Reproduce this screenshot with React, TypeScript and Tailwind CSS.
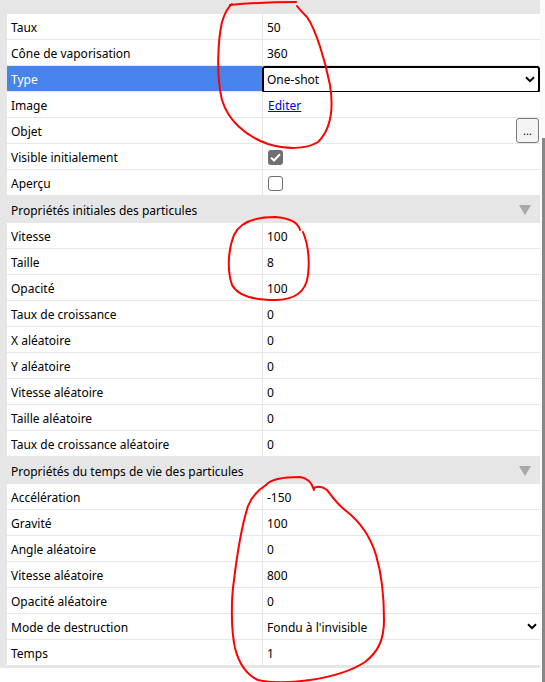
import React from 'react';

type Row =
  | { kind: 'text'; label: string; value: string }
  | { kind: 'header'; label: string }
  | { kind: 'select'; label: string; value: string; boxed?: boolean }
  | { kind: 'link'; label: string; value: string }
  | { kind: 'button'; label: string }
  | { kind: 'check'; label: string; checked: boolean };

const rows: Row[] = [
  { kind: 'text', label: 'Taux', value: '50' },
  { kind: 'text', label: 'Cône de vaporisation', value: '360' },
  { kind: 'select', label: 'Type', value: 'One-shot', boxed: true },
  { kind: 'link', label: 'Image', value: 'Editer' },
  { kind: 'button', label: 'Objet' },
  { kind: 'check', label: 'Visible initialement', checked: true },
  { kind: 'check', label: 'Aperçu', checked: false },
  { kind: 'header', label: 'Propriétés initiales des particules' },
  { kind: 'text', label: 'Vitesse', value: '100' },
  { kind: 'text', label: 'Taille', value: '8' },
  { kind: 'text', label: 'Opacité', value: '100' },
  { kind: 'text', label: 'Taux de croissance', value: '0' },
  { kind: 'text', label: 'X aléatoire', value: '0' },
  { kind: 'text', label: 'Y aléatoire', value: '0' },
  { kind: 'text', label: 'Vitesse aléatoire', value: '0' },
  { kind: 'text', label: 'Taille aléatoire', value: '0' },
  { kind: 'text', label: 'Taux de croissance aléatoire', value: '0' },
  { kind: 'header', label: 'Propriétés du temps de vie des particules' },
  { kind: 'text', label: 'Accélération', value: '-150' },
  { kind: 'text', label: 'Gravité', value: '100' },
  { kind: 'text', label: 'Angle aléatoire', value: '0' },
  { kind: 'text', label: 'Vitesse aléatoire', value: '800' },
  { kind: 'text', label: 'Opacité aléatoire', value: '0' },
  { kind: 'select', label: 'Mode de destruction', value: "Fondu à l'invisible" },
  { kind: 'text', label: 'Temps', value: '1' },
];

function Chevron() {
  return (
    <svg width="10" height="7" viewBox="0 0 10 7" className="shrink-0">
      <path d="M1 1.2 L5 5.2 L9 1.2" fill="none" stroke="#000" strokeWidth="2" />
    </svg>
  );
}

function PropRow({ row }: { row: Row }) {
  if (row.kind === 'header') {
    return (
      <div className="flex h-[27px] items-center justify-between bg-[#e6e6e6] pl-[4px] pr-[9px]">
        <span className="pt-[2px]">{row.label}</span>
        <svg width="12" height="10" viewBox="0 0 12 10">
          <polygon points="0,0 12,0 6,10" fill="#a8a8a8" />
        </svg>
      </div>
    );
  }

  const selected = row.kind === 'select' && row.boxed;

  return (
    <div className="flex h-[26px] border-b border-[#e6e6e6] bg-white">
      <div
        className={
          'flex w-[256px] shrink-0 items-center border-r border-[#e6e6e6] pl-[4px] pt-[2px] ' +
          (selected ? 'bg-[#4684ec] text-white' : '')
        }
      >
        {row.label}
      </div>
      <div className="flex min-w-0 flex-1 items-center">
        {row.kind === 'text' && <span className="pl-[4px] pt-[2px]">{row.value}</span>}
        {row.kind === 'link' && (
          <span className="pl-[5px] pt-[2px] text-[#0000ee] underline">{row.value}</span>
        )}
        {row.kind === 'select' &&
          (row.boxed ? (
            <div className="-ml-px -mb-px flex h-[27px] flex-1 items-center justify-between rounded-[3px] border-2 border-black pl-[3px] pr-[3px]">
              <span className="pt-[2px]">{row.value}</span>
              <Chevron />
            </div>
          ) : (
            <div className="flex flex-1 items-center justify-between pl-[4px] pr-[3px]">
              <span className="pt-[2px]">{row.value}</span>
              <Chevron />
            </div>
          ))}
        {row.kind === 'button' && (
          <div className="flex flex-1 justify-end pr-px">
            <div className="flex h-[25px] w-[23px] items-end justify-center rounded-[3px] border border-[#7a7a7a] bg-[#f4f4f4] pb-[6px] text-[11px] leading-none">
              ...
            </div>
          </div>
        )}
        {row.kind === 'check' && (
          <div className="pl-[5px] pt-[1px]">
            {row.checked ? (
              <div className="flex h-[15px] w-[15px] items-center justify-center rounded-[3px] bg-[#707070]">
                <svg width="11" height="9" viewBox="0 0 11 9">
                  <path d="M1 4.6 L4 7.5 L10 1.2" fill="none" stroke="#fff" strokeWidth="2" />
                </svg>
              </div>
            ) : (
              <div className="h-[15px] w-[15px] rounded-[3px] border border-[#6e6e6e] bg-white" />
            )}
          </div>
        )}
      </div>
    </div>
  );
}

export default function App() {
  return (
    <div
      className="relative flex h-[682px] w-[545px] overflow-hidden bg-white text-[12px] text-black"
      style={{ fontFamily: '"Noto Sans", "Open Sans", sans-serif' }}
    >
      <div className="flex w-[540px] shrink-0 flex-col self-start bg-[#e6e6e6] pb-[2px] pl-[7px] pt-[14px]">
        {rows.map((row, i) => (
          <PropRow key={i} row={row} />
        ))}
      </div>
      <div className="flex flex-1 flex-col bg-[#fafafa]">
        <div className="h-[138px]" />
        <div className="ml-[2px] flex-1 bg-[#878787]" />
      </div>

      {/* hand-drawn red annotations */}
      <svg
        className="pointer-events-none absolute inset-0"
        width="545"
        height="682"
        viewBox="0 0 545 682"
      >
        <g fill="none" stroke="#ff0000" strokeWidth="2" strokeLinecap="round">
          <path d="M230 5 C250 3, 275 2, 296 2" />
          <path d="M297 6 C300 10, 304 14, 307 17 C316 30, 325 60, 330 85 C334 110, 330 130, 318 142 C305 150, 285 149, 268 144 C245 136, 228 120, 222 100 C216 75, 218 40, 222 22 C225 12, 228 7, 232 4" />
          <path d="M300 230 C298 222, 290 218, 275 217 C255 217, 240 222, 234 235 C228 250, 227 270, 232 285 C238 296, 255 300, 275 300 C295 300, 306 292, 308 275 C310 258, 307 242, 303 232" />
          <path d="M266 485 C270 480, 280 477, 300 477 C308 478, 312 483, 314 490" />
          <path d="M314 488 C318 486, 323 487, 327 490 C332 496, 336 503, 345 510 C358 520, 370 535, 376 555 C382 575, 384 600, 384 620 C384 640, 378 652, 365 662 C350 672, 330 677, 310 680 C295 682, 275 684, 258 680 C245 674, 238 660, 235 648 C231 630, 231 600, 234 580 C237 555, 242 525, 248 506 C252 496, 258 490, 266 485" />
        </g>
      </svg>
    </div>
  );
}
